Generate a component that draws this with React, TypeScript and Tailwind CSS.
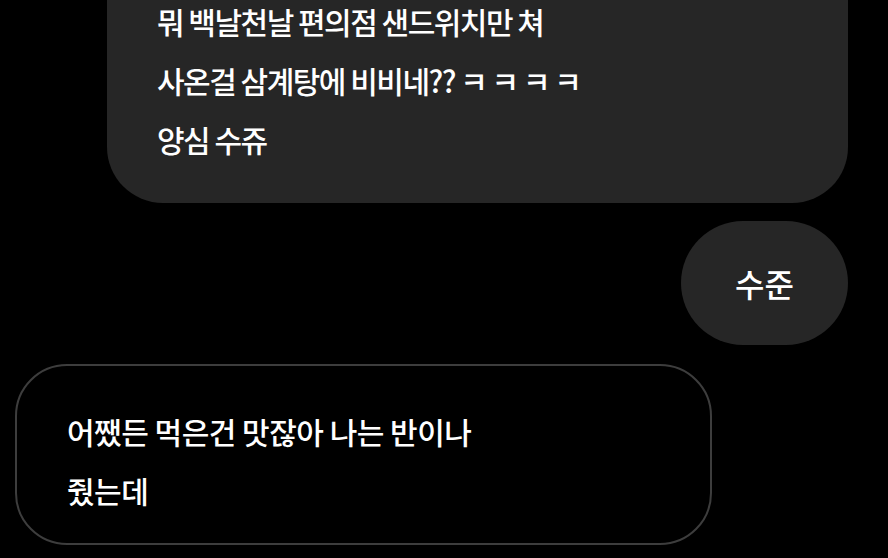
import React from "react";

const FONT = "font-['Noto_Sans_CJK_KR','Noto_Sans',sans-serif]";

export default function App() {
  return (
    <div className={`w-[888px] h-[558px] overflow-hidden bg-black text-white ${FONT}`}>
      <div className="flex flex-col">
        {/* received message, top cut off */}
        <div className="self-end mr-[40px] w-[741px] -mt-[8px] rounded-b-[56px] bg-[#262626] pl-[50px] pr-6 pb-[34px] text-[30px] font-medium leading-[59px] tracking-[-1.5px]">
          <p>뭐 백날천날 편의점 샌드위치만 쳐</p>
          <p>사온걸 삼계탕에 비비네?? ㅋ ㅋ ㅋ ㅋ</p>
          <p>양심 수쥬</p>
        </div>

        {/* sent reply */}
        <div className="self-end mr-[40px] mt-[18px] flex h-[124px] w-[167px] items-center justify-center rounded-full bg-[#262626] text-[32px] font-medium">
          수준
        </div>

        {/* outlined bubble */}
        <div className="ml-[15px] mt-[19px] w-[697px] h-[181px] rounded-[52px] border-2 border-[#3d3d3d] pl-[50px] pt-[36px] text-[30px] font-medium leading-[59px] tracking-[-0.5px]">
          <p>어쨌든 먹은건 맛잖아 나는 반이나</p>
          <p>줬는데</p>
        </div>
      </div>
    </div>
  );
}
